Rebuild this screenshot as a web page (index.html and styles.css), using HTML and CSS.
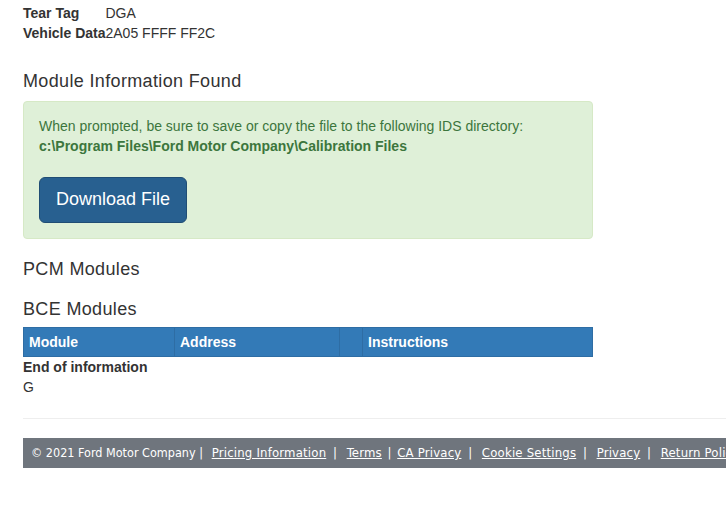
FILE: index.html
```html
<!DOCTYPE html>
<html lang="en">
<head>
    <meta charset="UTF-8">
    <meta name="viewport" content="width=device-width, initial-scale=1.0">
    <title>Module Information</title>
    <link rel="stylesheet" href="styles.css">
</head>
<body>

<div class="page">
    <div class="content">
        <table class="vehicle-info">
            <tr>
                <th>Tear Tag</th>
                <td>DGA</td>
            </tr>
            <tr>
                <th>Vehicle Data</th>
                <td>2A05 FFFF FF2C</td>
            </tr>
        </table>

        <h3 class="section-title first">Module Information Found</h3>
        <div class="alert-success">
            <p>When prompted, be sure to save or copy the file to the following IDS directory:<br>
            <b>c:\Program Files\Ford Motor Company\Calibration Files</b></p>
            <a href="#" class="btn-download">Download File</a>
        </div>

        <h3 class="section-title">PCM Modules</h3>

        <h3 class="section-title bce">BCE Modules</h3>
        <table class="module-table">
            <thead>
                <tr>
                    <th class="col-module">Module</th>
                    <th class="col-address">Address</th>
                    <th class="col-blank"></th>
                    <th>Instructions</th>
                </tr>
            </thead>
        </table>
        <div class="end-info">
            <b>End of information</b>
            <div>G</div>
        </div>
    </div>

    <hr class="divider">

    <footer>
        <span class="copyright">&copy; 2021 Ford Motor Company |</span>
        <a href="#">Pricing Information</a>
        <span class="sep">|</span>
        <a href="#">Terms</a>
        <span class="sep tight">|</span>
        <a href="#">CA Privacy</a>
        <span class="sep">|</span>
        <a href="#">Cookie Settings</a>
        <span class="sep">|</span>
        <a href="#">Privacy</a>
        <span class="sep">|</span>
        <a href="#">Return Policy</a>
        <span class="sep">|</span>
        <a href="#">Contact Us</a>
    </footer>
</div>

</body>
</html>
```

FILE: styles.css
```css
body {
    margin: 0;
    font-family: "Liberation Sans", Arial, Helvetica, sans-serif;
    font-size: 14px;
    line-height: 1.42857;
    color: #333;
    background: #fff;
    overflow-x: hidden;
}

.page {
    padding-left: 23px;
    padding-top: 4px;
}

.content {
    width: 570px;
}

.vehicle-info {
    border-collapse: collapse;
}

.vehicle-info th {
    text-align: left;
    padding: 0;
    font-weight: bold;
}

.vehicle-info td {
    padding: 0;
}

.section-title {
    font-size: 18px;
    font-weight: 500;
    line-height: 1.1;
    letter-spacing: 0.35px;
    margin: 20px 0 10px;
}

.section-title.first {
    margin-top: 28px;
    margin-bottom: 9px;
}

.section-title.bce {
    margin-bottom: 8px;
}

.alert-success {
    background-color: #dff0d8;
    border: 1px solid #d6e9c6;
    color: #3c763d;
    border-radius: 4px;
    padding: 15px;
    margin-bottom: 21px;
}

.alert-success p {
    margin: 0 0 20px;
}

.btn-download {
    display: inline-block;
    background-color: #286090;
    border: 1px solid #204d74;
    color: #fff;
    text-decoration: none;
    font-size: 18px;
    line-height: 1.3333;
    padding: 10px 16px;
    border-radius: 6px;
}

.module-table {
    width: 100%;
    border-collapse: collapse;
    background-color: #337ab7;
    color: #fff;
}

.module-table th {
    text-align: left;
    font-weight: bold;
    padding: 5px 5px 5px;
    border: 1px solid #2e6da4;
    line-height: 18px;
}

.module-table .col-module {
    width: 140px;
}

.module-table .col-address {
    width: 154px;
}

.module-table .col-blank {
    width: 12px;
}

.end-info {
    padding-top: 1px;
}

.divider {
    border: 0;
    border-top: 1px solid #eee;
    margin: 20px 0 19px;
}

/* footer bar runs past the right edge, text is clipped */
footer {
    background-color: #6f757d;
    color: #fff;
    font-family: "DejaVu Sans Condensed", "DejaVu Sans", sans-serif;
    font-size: 13px;
    white-space: nowrap;
    overflow: hidden;
    padding: 7px 8px;
    line-height: 16px;
}

footer a {
    color: #fff;
    text-decoration: underline;
    letter-spacing: 0.2px;
}

.copyright {
    font-size: 12.5px;
    margin-right: 5px;
}

.sep {
    margin: 0 6px 0 3px;
}

.sep.tight {
    margin: 0 2px;
}
```
